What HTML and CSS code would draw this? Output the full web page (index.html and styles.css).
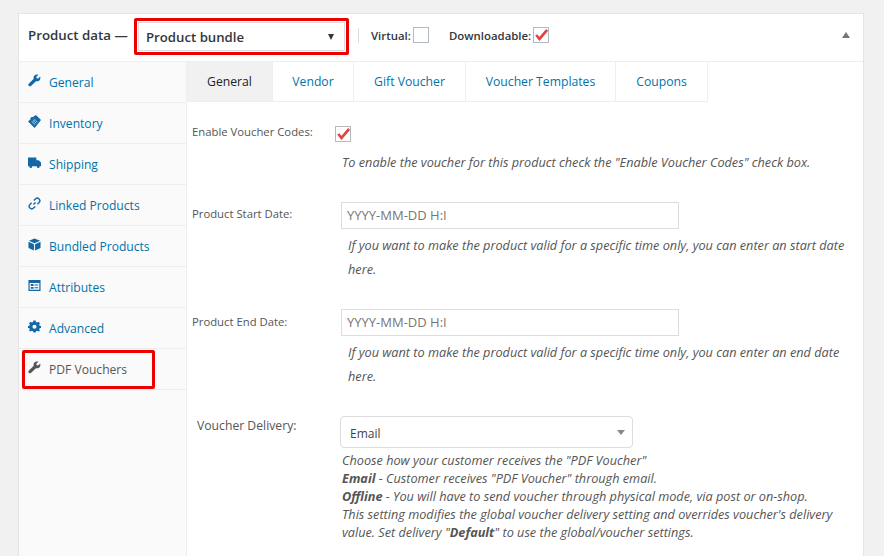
FILE: index.html
```html
<!DOCTYPE html>
<html lang="en">
<head>
<meta charset="utf-8">
<title>Product data</title>
<link rel="stylesheet" href="styles.css">
</head>
<body>
<div class="panel">
  <header class="head">
    <span class="title">Product data —</span>
    <div class="type-mark"><div class="type-select"><span>Product bundle</span><i class="tri-down"></i></div></div>
    <span class="sep"></span>
    <label class="opt virtual">Virtual:<span class="check"></span></label>
    <label class="opt download">Downloadable:<span class="check"><svg viewBox="0 0 16 16" class="tick"><path d="M2.500 8 6.300 12.500 15 2.200" /></svg></span></label>
    <i class="tri-up"></i>
  </header>
  <div class="body">
    <nav class="side">
      <a class="item"><svg class="ico" viewBox="0 0 14 14"><path d="M13.2 2.6 10.9 4.8 9.3 4.5 9 3 11.2.8C9.6.2 7.9.5 7 1.6 6 2.6 5.8 4 6.2 5.2L.8 10.6C.2 11.3.3 12.2.9 12.8s1.600.7 2.200.1L8.600 7.700C9.800 8.100 11.200 7.800 12.200 6.900 13.200 5.800 13.600 4.100 13.200 2.600Z"/></svg>General</a>
      <a class="item"><svg class="ico" viewBox="0 0 14 14"><path d="M8.500 0 14 5.500 7.200 14 0 7 2.500 4.800 3 2.500 5.300 2.200Z"/><path class="cut" d="M3.800 6.500 7.800 10.500M5 5.200 9 9.200M6.300 3.900 10.300 7.900M4.500 8.800 8 5M6 10.300 9.700 6.500"/></svg>Inventory</a>
      <a class="item"><svg class="ico" viewBox="0 0 14 14"><path d="M0 1.500H9V4.500H11.500L14 7V11H0Z"/><circle cx="3" cy="11.500" r="1.500"/><circle cx="11" cy="11.500" r="1.500"/></svg>Shipping</a>
      <a class="item"><svg class="ico line" viewBox="0 0 14 14"><path d="M5.800 8.200 8.200 5.800M6.300 3.800 8 2.100A2.400 2.400 0 0 1 11.900 6L10.200 7.700M7.700 10.200 6 11.900A2.400 2.400 0 0 1 2.100 8L3.800 6.300"/></svg>Linked Products</a>
      <a class="item"><svg class="ico" viewBox="0 0 14 14"><path d="M7 .5 13 3 7 5.600 1 3ZM.5 4 6.400 6.600V13.500L.5 10.800ZM13.500 4 7.600 6.600V13.500L13.500 10.800Z"/></svg>Bundled Products</a>
      <a class="item"><svg class="ico" viewBox="0 0 14 14"><path fill-rule="evenodd" d="M.5 1H13.500V13H.5ZM1.800 4.300V11.700H12.200V4.300ZM3 5.500H6V7.500H3ZM3 8.500H6V10.500H3ZM7 6H11V7H7ZM7 9H11V10H7Z"/></svg>Attributes</a>
      <a class="item"><svg class="ico" viewBox="0 0 14 14"><path fill-rule="evenodd" d="M5.800 1H8.200L8.600 2.700 9.800 3.200 11.300 2.300 12.900 4 12 5.400 12.500 6.600 14 7V9L12.500 9.300 12 10.500 12.900 12 11.300 13 9.800 12.100 8.600 12.600 8.200 14H5.800L5.400 12.600 4.200 12.100 2.700 13 1.100 12 2 10.500 1.500 9.300 0 9V7L1.500 6.600 2 5.400 1.100 4 2.700 2.300 4.200 3.200 5.400 2.700ZM7 5.500A2.200 2.200 0 1 0 7 10 2.200 2.200 0 0 0 7 5.500Z" transform="translate(0 -.5)"/></svg>Advanced</a>
      <a class="item current"><svg class="ico" viewBox="0 0 14 14"><path d="M13.200 2.600 10.900 4.800 9.300 4.500 9 3 11.200.8C9.600.2 7.900.5 7 1.600 6 2.600 5.800 4 6.200 5.200L.8 10.600C.2 11.300.3 12.200.9 12.800s1.600.7 2.200.1L8.600 7.700C9.800 8.100 11.200 7.800 12.200 6.900 13.200 5.800 13.600 4.100 13.200 2.600Z"/></svg>PDF Vouchers</a>
    </nav>
    <main class="content">
      <div class="tabs">
        <a class="tab active">General</a>
        <a class="tab t-vendor">Vendor</a>
        <a class="tab t-gift">Gift Voucher</a>
        <a class="tab t-templates">Voucher Templates</a>
        <a class="tab t-coupons">Coupons</a>
      </div>
      <div class="form">
        <div class="row r-enable">
          <span class="lab">Enable Voucher Codes:</span>
          <div class="val"><span class="check small-gap"><svg viewBox="0 0 16 16" class="tick"><path d="M2.500 8 6.300 12.500 15 2.200" /></svg></span>
          <p class="desc d-enable">To enable the voucher for this product check the "Enable Voucher Codes" check box.</p></div>
        </div>
        <div class="row r-start">
          <span class="lab">Product Start Date:</span>
          <div class="val"><div class="input">YYYY-MM-DD H:I</div>
          <p class="desc d-date">If you want to make the product valid for a specific time only, you can enter an start date here.</p></div>
        </div>
        <div class="row r-end">
          <span class="lab">Product End Date:</span>
          <div class="val"><div class="input">YYYY-MM-DD H:I</div>
          <p class="desc d-date">If you want to make the product valid for a specific time only, you can enter an end date here.</p></div>
        </div>
        <div class="row r-delivery">
          <span class="lab lab-delivery">Voucher Delivery:</span>
          <div class="val"><div class="pick"><span>Email</span><i class="tri-grey"></i></div>
          <p class="desc d-delivery">Choose how your customer receives the "PDF Voucher"<br><b>Email</b> - Customer receives "PDF Voucher" through email.<br><b>Offline</b> - You will have to send voucher through physical mode, via post or on-shop.<br>This setting modifies the global voucher delivery setting and overrides voucher's delivery value. Set delivery "<b>Default</b>" to use the global/voucher settings.</p></div>
        </div>
      </div>
    </main>
  </div>
</div>
</body>
</html>
```
FILE: styles.css
```css
*, *::after { box-sizing: border-box; }
html, body { margin: 0; height: 100%; }
body {
  background: #f1f1f1;
  font-family: "Open Sans", sans-serif;
  font-size: 12px;
  color: #555;
  overflow: hidden;
  padding: 13px 20px 0 18px;
}
.panel {
  background: #fff;
  border: 1px solid #e5e5e5;
  border-bottom: 0;
  height: 560px;
}
.head {
  height: 48px;
  border-bottom: 1px solid #eee;
  display: flex;
  align-items: center;
  padding-left: 9px;
  color: #32373c;
}
.title { font-size: 13.3px; font-weight: 600; line-height: 18px; margin-top: -5px; width: 106px; flex: none; }
.type-mark {
  width: 215px;
  height: 37px;
  border: 3px solid #ee0000;
  border-radius: 2px;
  padding: 1px;
  margin-top: -2px;
  flex: none;
}
.type-select {
  height: 100%;
  border: 1px solid #ddd;
  display: flex;
  align-items: center;
  justify-content: space-between;
  padding: 0 10px 0 7px;
  font-size: 13.2px;
  font-weight: 600;
  color: #32373c;
}
.tri-down { width: 0; height: 0; border: 3.500px solid transparent; border-top: 6px solid #32373c; border-bottom: 0; }
.sep { width: 1px; height: 15px; background: #ddd; margin: -4px 12px 0 9px; flex: none; }
.opt { display: flex; align-items: center; font-size: 11.4px; font-weight: 600; color: #32373c; margin-top: -5px; }
.virtual { width: 78px; }
.check {
  width: 16px; height: 16px;
  border: 1px solid #b4b9be;
  background: #fff;
  margin-left: 2px;
  display: block;
  flex: none;
}
.tick { display: block; width: 14px; height: 14px; fill: none; stroke: #e04545; stroke-width: 3; }
.tri-up { width: 0; height: 0; border: 4.500px solid transparent; border-bottom: 6px solid #72777c; border-top: 0; margin-left: auto; margin-right: 13px; margin-top: -5px; }
.body { display: flex; height: 500px; }
.side { width: 168px; flex: none; background: #fafafa; border-right: 1px solid #eee; align-self: stretch; }
.item {
  height: 41px;
  border-bottom: 1px solid #eee;
  display: flex;
  align-items: center;
  padding-left: 9px;
  color: #0073aa;
  font-size: 12.1px;
  position: relative;
}
.ico { width: 13px; height: 13px; fill: #1268a5; margin-right: 8px; margin-top: -4px; flex: none; }
.ico .cut { stroke: #cfe0ec; stroke-width: .6; fill: none; }
.ico.line { fill: none; stroke: #1268a5; stroke-width: 1.500; }
.current { color: #555; }
.current .ico { fill: #555; }
.current::after {
  content: "";
  position: absolute;
  left: 3px; top: 1px;
  width: 133px; height: 39px;
  border: 3px solid #ee0000;
  border-radius: 2px;
}
.content { flex: 1; min-width: 0; }
.tabs { display: flex; height: 40px; }
.tab {
  height: 40px;
  display: flex;
  align-items: center;
  justify-content: center;
  border-right: 1px solid #eee;
  border-bottom: 1px solid #eee;
  color: #0073aa;
  font-size: 12.2px;
}
.tab.active { width: 86px; background: #f1f1f1; color: #222; }
.t-vendor { width: 81px; }
.t-gift { width: 112px; }
.t-templates { width: 150px; }
.t-coupons { width: 92px; }
.form { padding: 0 14px 0 5px; }
.row { display: flex; }
.lab { width: 148px; flex: none; font-size: 11.3px; color: #555; }
.lab-delivery { padding: 1px 0 0 5px; font-size: 12.2px; }
.val { flex: 1; min-width: 0; }
.r-enable { padding-top: 24px; height: 100px; }
.r-enable .lab { line-height: 16px; margin-top: -2px; }
.small-gap { margin-left: -5px; }
.desc { margin: 0; font-style: italic; font-size: 12.7px; color: #555; line-height: 24px; }
.d-enable { margin-top: 10px; margin-left: 2px; line-height: 20px; white-space: nowrap; }
.r-start, .r-end { height: 107px; }
.r-start .lab { padding-top: 4px; line-height: 16px; }
.r-end .lab { padding-top: 5px; line-height: 16px; }
.input {
  width: 338px; height: 27px; border: 1px solid #ddd;
  padding-left: 5px; line-height: 25px; color: #777; font-size: 13px;
  margin-left: 1px;
}
.d-date { margin-left: 8px; margin-top: 4px; width: 500px; }
.pick {
  width: 293px; height: 32px; border: 1px solid #ddd; border-radius: 4px;
  display: flex; align-items: center; justify-content: space-between;
  padding: 2px 7px 0 9px; font-size: 12px; color: #444;
}
.tri-grey { width: 0; height: 0; border: 4px solid transparent; border-top: 5px solid #888; border-bottom: 0; margin-top: -2px; }
.d-delivery { line-height: 18px; margin-left: 2px; margin-top: 3px; width: 510px; }
```
